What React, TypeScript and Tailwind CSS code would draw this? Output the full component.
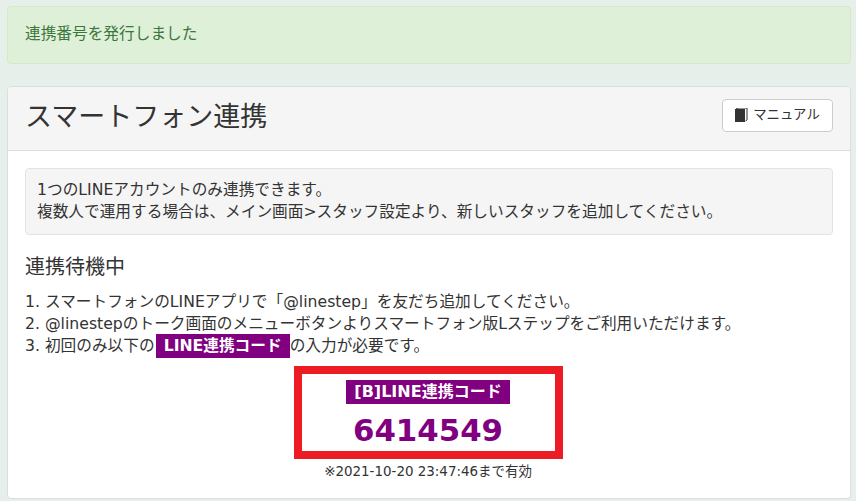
const font = "font-['DejaVu_Sans','Noto_Sans_CJK_JP',sans-serif]";

function BookIcon() {
	return (
		<svg className="mr-[5px] mt-[1px] h-[14px] w-[13px]" viewBox="0 0 13 14">
			<rect fill="#333333" height="13" width="10" x="0" y="1" />
			<path d="M1 1 L3 0 H12 V12 L10.5 13" fill="none" stroke="#333333" strokeWidth="1" />
		</svg>
	);
}

export default function App() {
	return (
		<div className={`${font} h-[501px] w-[856px] overflow-hidden bg-[#e7efeb] px-[7px] pt-[6px] text-[15.68px] leading-[22px] text-[#333333] [text-spacing-trim:space-all]`}>
			<div className="flex h-[58px] w-[844px] items-center rounded-[4px] border border-[#d6e9c6] bg-[#dff0d8] px-[17px] pb-[3px] text-[#3c763d]">
				連携番号を発行しました
			</div>
			<div className="mt-[22px] w-[844px] overflow-hidden rounded-[4px] border border-[#dddddd] bg-white">
				<div className="flex h-[64px] items-center justify-between border-b border-[#dddddd] bg-[#f5f5f5] px-[17px]">
					<h1 className="pb-[3px] text-[27px] font-normal leading-[32px]">スマートフォン連携</h1>
					<button className="mb-[6px] flex h-[33px] w-[111px] items-center justify-center rounded-[4px] border border-[#cccccc] bg-white pb-[2px] text-[13.4px]">
						<BookIcon />
						マニュアル
					</button>
				</div>
				<div className="px-[17px] pt-[17px]">
					<div className="h-[67px] rounded-[4px] border border-[#e3e3e3] bg-[#f5f5f5] px-[11px] pt-[10px]">
						<p>1つのLINEアカウントのみ連携できます。</p>
						<p>複数人で運用する場合は、メイン画面&gt;スタッフ設定より、新しいスタッフを追加してください。</p>
					</div>
					<h2 className="mt-[19px] text-[20px] font-normal leading-[26px]">連携待機中</h2>
					<div className="mt-[11px]">
						<p>1. スマートフォンのLINEアプリで「@linestep」を友だち追加してください。</p>
						<p>2. @linestepのトーク画面のメニューボタンよりスマートフォン版Lステップをご利用いただけます。</p>
						<p className="flex h-[22px] items-center">
							3. 初回のみ以下の
							<span className="ml-[1px] h-[24px] bg-[#800080] px-[8px] font-bold leading-[24px] text-white">LINE連携コード</span>
							の入力が必要です。
						</p>
					</div>
					<div className="mt-[9px] flex flex-col items-center pr-[2px]">
						<div className="flex h-[93px] w-[269px] flex-col items-center border-[8px] border-[#ed1c24] pt-[6px]">
							<span className="h-[24px] bg-[#800080] px-[8px] text-[16px] font-bold leading-[24px] text-white">[B]LINE連携コード</span>
							<span className="mt-[5px] text-[30.8px] font-bold leading-[42px] text-[#800080]">6414549</span>
						</div>
						<p className="mt-[3px] text-[13.44px] leading-[19px]">※2021-10-20 23:47:46まで有効</p>
					</div>
					<div className="h-[17px]" />
				</div>
			</div>
		</div>
	);
}
